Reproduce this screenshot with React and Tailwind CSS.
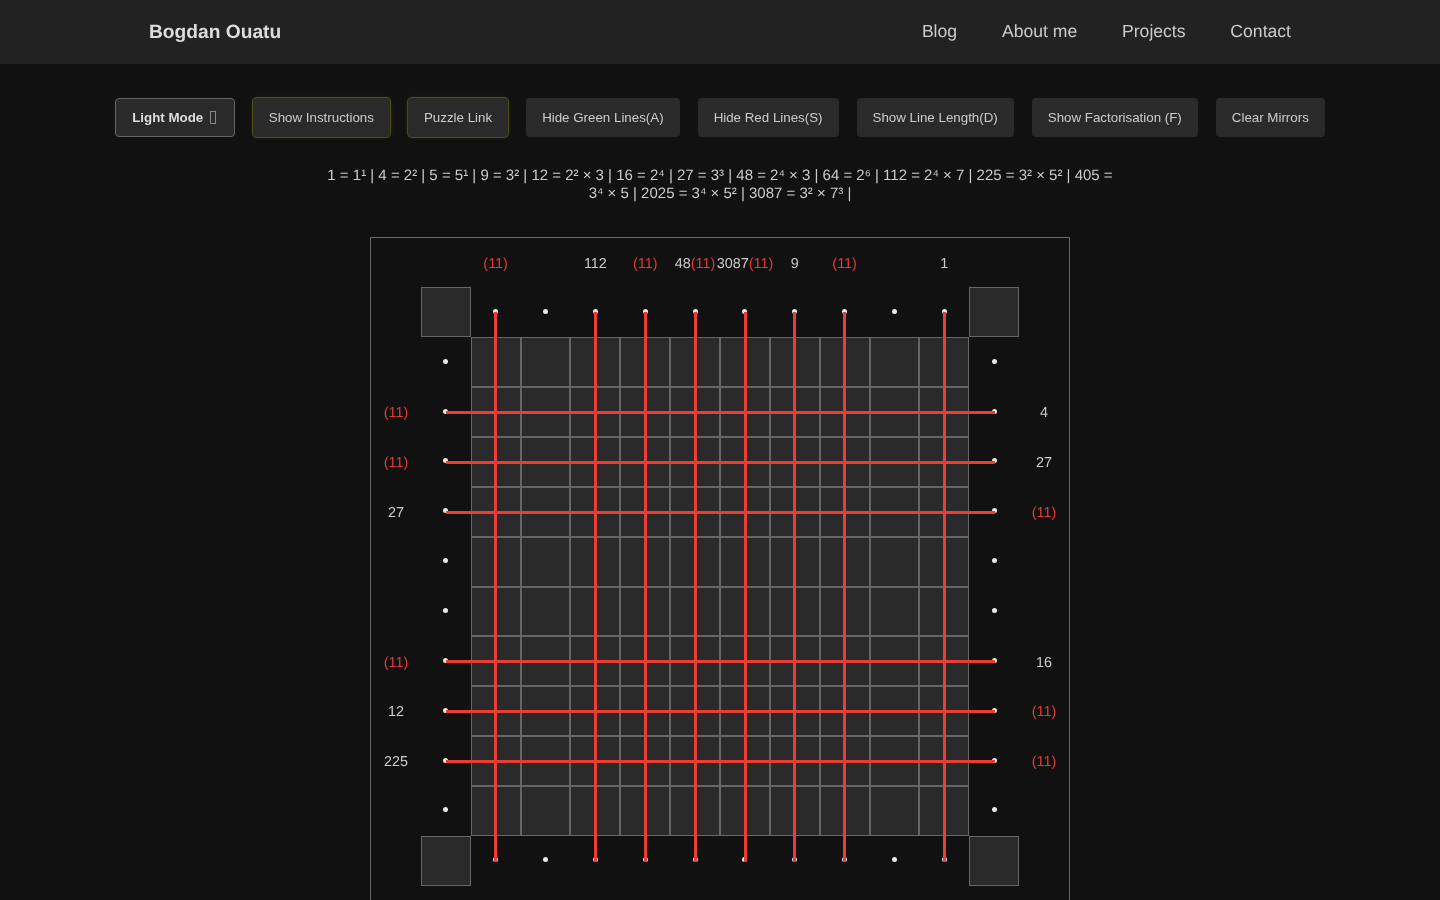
import React from "react";

const STEP = 698 / 14;
const vLines = [0, 2, 3, 4, 5, 6, 7, 9];
const hTops = [173.45, 223.45, 273.45, 422.45, 472.45, 522.45];

const top = [["(11)"], [], ["112"], ["(11)"], ["48", "(11)"], ["3087", "(11)"], ["9"], ["(11)"], [], ["1"]];
const left = ["", "(11)", "(11)", "27", "", "", "(11)", "12", "225", ""];
const right = ["", "4", "27", "(11)", "", "", "16", "(11)", "(11)", ""];

function Label({ parts }) {
  return (
    <div className="flex items-center justify-center whitespace-nowrap pt-[4px] text-[14.4px] text-[#cccccc]">
      {parts.map((p, i) => (
        <span key={i} className={p === "(11)" ? "text-[#e53935]" : ""}>{p}</span>
      ))}
    </div>
  );
}

function Dot() {
  return (
    <div className="flex items-center justify-center pb-[2px]">
      <div className="h-[5px] w-[5px] rounded-full bg-[#e8e8e8]" />
    </div>
  );
}

function Corner() {
  return <div className="border border-[#666666] bg-[#2a2a2a]" />;
}

function Btn({ children, variant }) {
  const base = "rounded px-4 h-[39px] text-[13.3333px] text-[#cccccc] bg-[#2a2a2a] whitespace-nowrap";
  if (variant === "theme") {
    return <button className={`${base} border border-[#666666] font-bold text-[#dddddd]`}>{children}</button>;
  }
  if (variant === "link") {
    return <button className={`${base} shadow-[0_0_0_1px_#4d4d14,0_0_3px_1px_rgba(77,77,20,0.4)]`}>{children}</button>;
  }
  return <button className={base}>{children}</button>;
}

export default function App() {
  const cells = [];
  cells.push(<div key="t0" />, <div key="t1" />);
  top.forEach((p, i) => cells.push(<Label key={`tl${i}`} parts={p} />));
  cells.push(<div key="t2" />, <div key="t3" />);
  cells.push(<div key="d0" />, <Corner key="c0" />);
  for (let i = 0; i < 10; i++) cells.push(<Dot key={`dt${i}`} />);
  cells.push(<Corner key="c1" />, <div key="d1" />);
  for (let r = 0; r < 10; r++) {
    cells.push(<Label key={`ll${r}`} parts={left[r] ? [left[r]] : []} />);
    cells.push(<Dot key={`dl${r}`} />);
    for (let c = 0; c < 10; c++) {
      cells.push(<div key={`g${r}-${c}`} className="border border-[#666666] bg-[#2a2a2a]" />);
    }
    cells.push(<Dot key={`dr${r}`} />);
    cells.push(<Label key={`rl${r}`} parts={right[r] ? [right[r]] : []} />);
  }
  cells.push(<div key="b0" />, <Corner key="c2" />);
  for (let i = 0; i < 10; i++) cells.push(<Dot key={`db${i}`} />);
  cells.push(<Corner key="c3" />, <div key="b1" />);
  for (let i = 0; i < 14; i++) cells.push(<div key={`bl${i}`} />);

  return (
    <div className="min-h-screen bg-[#111111]">
      <div className="pb-10 font-['Liberation_Sans',Arial,sans-serif] text-[#dddddd] [text-rendering:geometricPrecision] [will-change:transform]">
        <header className="flex h-16 items-center justify-between bg-[#222222] px-[149px]">
          <div className="pt-[2px] text-[19.2px] font-bold text-[#dddddd]">Bogdan Ouatu</div>
          <nav className="flex gap-[44.8px] pb-[2px] text-[17.6px] text-[#cccccc]">
            <a>Blog</a>
            <a>About me</a>
            <a>Projects</a>
            <a>Contact</a>
          </nav>
        </header>

        <div className="mt-[34px] flex justify-center gap-[18px]">
          <Btn variant="theme">
            <span className="flex items-center gap-[7px]">
              Light Mode
              <span className="mr-[1.5px] h-[13px] w-[6px] border border-[#888888]" />
            </span>
          </Btn>
          <Btn variant="link">Show Instructions</Btn>
          <Btn variant="link">Puzzle Link</Btn>
          <Btn>Hide Green Lines(A)</Btn>
          <Btn>Hide Red Lines(S)</Btn>
          <Btn>Show Line Length(D)</Btn>
          <Btn>Show Factorisation (F)</Btn>
          <Btn>Clear Mirrors</Btn>
        </div>

        <p className="mx-auto mt-[30px] w-[800px] text-center text-[15px] leading-[18px] text-[#cccccc]">
          1 = 1¹ | 4 = 2² | 5 = 5¹ | 9 = 3² | 12 = 2² × 3 | 16 = 2⁴ | 27 = 3³ | 48 = 2⁴ × 3 | 64 = 2⁶ | 112 = 2⁴ × 7 | 225 = 3² × 5² | 405 = 3⁴ × 5 | 2025 = 3⁴ × 5² | 3087 = 3² × 7³ |
        </p>

        <div className="relative mx-auto mt-[33.55px] h-[700px] w-[700px] border border-[#666666]">
          <div className="grid h-[698px] w-[698px] grid-cols-[repeat(14,minmax(0,1fr))] grid-rows-[repeat(14,minmax(0,1fr))]">
            {cells}
          </div>
          {vLines.map((c) => (
            <div
              key={c}
              className="absolute w-[3px] bg-[#eb3d33]"
              style={{ left: 123.3 + c * STEP, top: 74.45, height: 550 }}
            />
          ))}
          {hTops.map((y) => (
            <div
              key={y}
              className="absolute h-[3px] bg-[#eb3d33]"
              style={{ left: 75, top: y, width: 549 }}
            />
          ))}
        </div>
      </div>
    </div>
  );
}
